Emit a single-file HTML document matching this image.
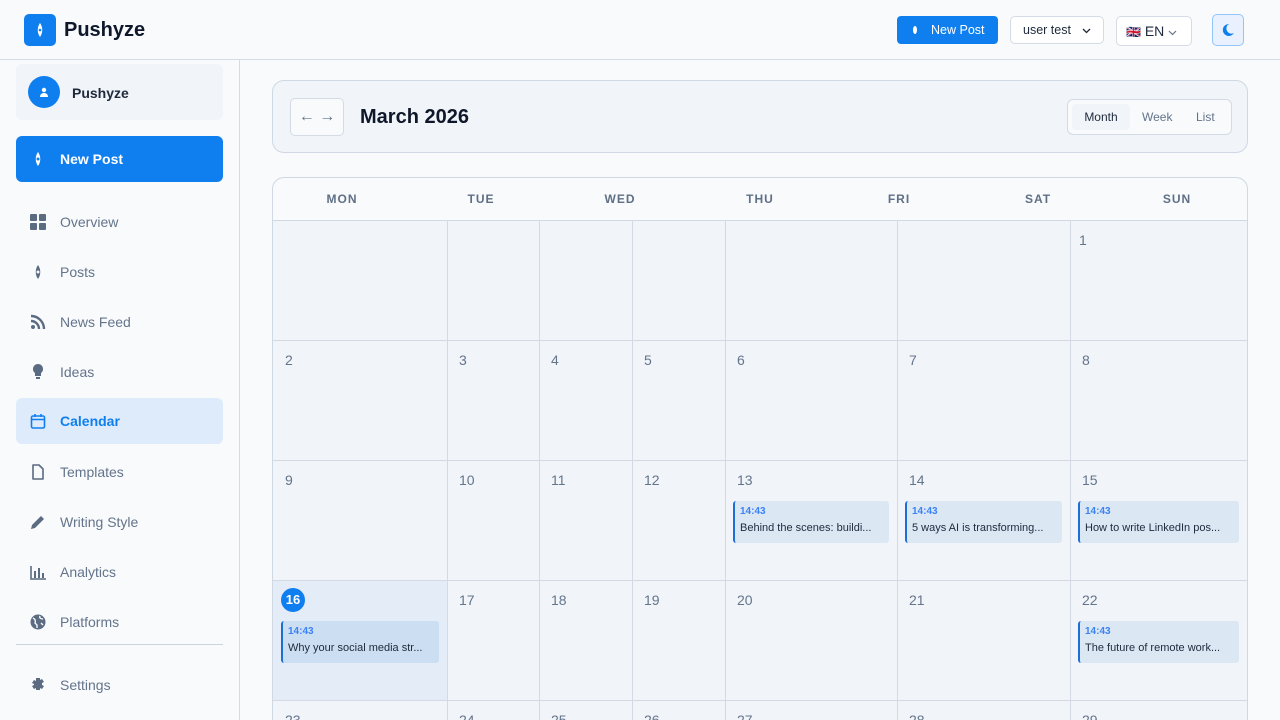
<!DOCTYPE html>
<html style="width:1280px;height:720px;overflow:hidden"><head><meta charset="utf-8"><style>
*{box-sizing:border-box;margin:0;padding:0}
body{width:1280px;height:720px;overflow:hidden;background:#f8fafc;font-family:"Liberation Sans",sans-serif;position:relative;color:#0f172a}
.abs{position:absolute}
.top{left:0;top:0;width:1280px;height:60px;border-bottom:1px solid #d5dbe4;background:#f8fafc}
.side{left:0;top:60px;width:240px;height:660px;border-right:1px solid #d5dbe4}
.nav{position:absolute;left:16px;width:207px;height:46px;border-radius:6px;display:flex;align-items:center;font-size:14px;color:#64748b}
.nav svg{position:absolute;left:14px;top:15px}
.nav span{position:absolute;left:44px}
.num{position:absolute;font-size:14px;color:#64748b}
.ev{position:absolute;height:42px;background:#dce7f4;border-left:2px solid #1d6fd8;border-radius:3px;padding:5px 0 0 5px;overflow:hidden}
.ev b{display:block;font-size:10px;color:#3b82f6;font-weight:bold}
.ev i{display:block;font-style:normal;font-size:11px;color:#1e293b;margin-top:5px;white-space:nowrap}
.dh{position:absolute;top:192px;font-size:12px;color:#5f6f86;letter-spacing:1px;font-weight:bold;width:60px;text-align:center}
.vl{position:absolute;top:220px;width:1px;height:500px;background:#d3dae4}
.hl{position:absolute;left:273px;width:974px;height:1px;background:#d3dae4}
</style></head><body>
<div class="abs top">
 <div class="abs" style="left:24px;top:14px;width:32px;height:32px;border-radius:5px;background:#0f7ff0"><svg width="10" height="16" viewBox="0 0 10 16" style="position:absolute;left:11px;top:8px"><path d="M5 1C2 5 2 11 5 15 8 11 8 5 5 1z" fill="#fff"/><circle cx="5" cy="8" r="1.3" fill="#0f7ff0"/></svg></div>
 <div class="abs" style="left:64px;top:19px;font-size:20px;font-weight:bold;color:#0f172a">Pushyze</div>
 <div class="abs" style="left:897px;top:16px;width:101px;height:28px;border-radius:4px;background:#0f7ff0;color:#fff;font-size:12.5px;line-height:28px"><span style="position:absolute;left:16px;top:10px;width:4px;height:8px;border-radius:50%;background:#fff"></span><span style="position:absolute;left:34px">New Post</span></div>
 <div class="abs" style="left:1010px;top:16px;width:94px;height:28px;border-radius:5px;border:1px solid #d5dbe4;background:#fff;font-size:12.5px;line-height:26px;padding-left:12px;color:#1e293b">user test <svg width="9" height="6" style="margin-left:8px"><path d="M1 1l3.5 3.5L8 1" stroke="#1e293b" stroke-width="1.3" fill="none"/></svg></div>
 <div class="abs" style="left:1116px;top:16px;width:76px;height:30px;border-radius:5px;border:1px solid #d5dbe4;background:#fff;font-size:14px;line-height:28px;padding-left:9px;color:#1e293b"><span style="font-size:12px">🇬🇧</span> EN <svg width="9" height="6"><path d="M1 1l3.5 3.5L8 1" stroke="#64748b" stroke-width="1.2" fill="none"/></svg></div>
 <div class="abs" style="left:1212px;top:14px;width:32px;height:32px;border-radius:5px;border:1px solid #93c5fd;background:#e8f1fd"><svg width="16" height="16" viewBox="0 0 16 16" style="position:absolute;left:7px;top:7px"><path d="M9 2a6 6 0 1 0 5 9A5 5 0 0 1 9 2z" fill="#0f7ff0"/></svg></div>
</div>
<div class="abs side">
 <div class="abs" style="left:16px;top:4px;width:207px;height:56px;border-radius:6px;background:#f1f5f9">
  <div class="abs" style="left:12px;top:12px;width:32px;height:32px;border-radius:50%;background:#0f7ff0"><svg width="10" height="10" viewBox="0 0 10 10" style="position:absolute;left:11px;top:11px"><circle cx="5" cy="3" r="2.2" fill="#fff"/><path d="M1 10c0-3 2-4 4-4s4 1 4 4z" fill="#fff"/></svg></div>
  <div class="abs" style="left:56px;top:21px;font-size:14px;font-weight:bold;color:#1e293b">Pushyze</div>
 </div>
 <div class="nav" style="top:76px;background:#0f7ff0;color:#fff;font-weight:bold"><svg width="16" height="16" viewBox="0 0 16 16"><path d="M8 1C5 5 5 11 8 15 11 11 11 5 8 1z" fill="#fff"/><circle cx="8" cy="8" r="1.5" fill="#0f7ff0"/></svg><span>New Post</span></div>
 <div class="nav" style="top:139px"><svg width="16" height="16"><rect x="0" y="0" width="7" height="7" rx="1" fill="#5b6b82"/><rect x="9" y="0" width="7" height="7" rx="1" fill="#5b6b82"/><rect x="0" y="9" width="7" height="7" rx="1" fill="#5b6b82"/><rect x="9" y="9" width="7" height="7" rx="1" fill="#5b6b82"/></svg><span>Overview</span></div>
 <div class="nav" style="top:189px"><svg width="16" height="16" viewBox="0 0 16 16"><path d="M8 1C5 5 5 11 8 15 11 11 11 5 8 1z" fill="#5b6b82"/><circle cx="8" cy="8" r="1.5" fill="#f8fafc"/></svg><span>Posts</span></div>
 <div class="nav" style="top:239px"><svg width="16" height="16" viewBox="0 0 16 16"><circle cx="3" cy="13" r="2" fill="#5b6b82"/><path d="M1 7a8 8 0 0 1 8 8M1 2a13 13 0 0 1 13 13" stroke="#5b6b82" stroke-width="2.4" fill="none"/></svg><span>News Feed</span></div>
 <div class="nav" style="top:289px"><svg width="16" height="16" viewBox="0 0 16 16"><path d="M8 0a5 5 0 0 0-3 9v3h6V9A5 5 0 0 0 8 0z" fill="#5b6b82"/><rect x="6" y="13" width="4" height="2" fill="#5b6b82"/></svg><span>Ideas</span></div>
 <div class="nav" style="top:338px;background:#deebfa;color:#0f7ff0;font-weight:bold"><svg width="16" height="16" viewBox="0 0 16 16"><rect x="1.5" y="3" width="13" height="12" rx="1.5" stroke="#0f7ff0" stroke-width="1.6" fill="none"/><path d="M1.5 6.5h13M5 1v3M11 1v3" stroke="#0f7ff0" stroke-width="1.6"/></svg><span>Calendar</span></div>
 <div class="nav" style="top:389px"><svg width="16" height="16" viewBox="0 0 16 16"><path d="M3 1h6l4 4v10H3z" stroke="#5b6b82" stroke-width="1.6" fill="none" stroke-linejoin="round"/></svg><span>Templates</span></div>
 <div class="nav" style="top:439px"><svg width="16" height="16" viewBox="0 0 16 16"><path d="M1 15l1-4 9-9 3 3-9 9z" fill="#5b6b82"/></svg><span>Writing Style</span></div>
 <div class="nav" style="top:489px"><svg width="16" height="16" viewBox="0 0 16 16"><path d="M1 2v13h15" stroke="#5b6b82" stroke-width="1.6" fill="none"/><rect x="4" y="7" width="2" height="7" fill="#5b6b82"/><rect x="8" y="4" width="2" height="10" fill="#5b6b82"/><rect x="12" y="9" width="2" height="5" fill="#5b6b82"/></svg><span>Analytics</span></div>
 <div class="nav" style="top:539px"><svg width="16" height="16" viewBox="0 0 16 16"><circle cx="8" cy="8" r="7.5" fill="#5b6b82"/><path d="M3 4c2 1 3 3 2 5l2 2v3M10 2c-1 2 1 3 3 3M11 9l2 2" stroke="#f8fafc" stroke-width="1.4" fill="none"/></svg><span>Platforms</span></div>
 <div class="abs" style="left:16px;top:584px;width:207px;height:1px;background:#cbd5e1"></div>
 <div class="nav" style="top:602px"><svg width="16" height="16" viewBox="0 0 16 16"><path d="M6 1h4v2l2-1 2 3-2 1v2l2 1-2 3-2-1v2H6v-2l-2 1-2-3 2-1V7L2 6l2-3 2 1z" fill="#5b6b82"/></svg><span>Settings</span></div>
</div>

<div class="abs" style="left:272px;top:80px;width:976px;height:73px;border:1px solid #cfd8e3;border-radius:12px;background:#f1f5f9">
 <div class="abs" style="left:17px;top:17px;width:54px;height:38px;border:1px solid #d5dbe4;border-radius:5px;background:#f8fafc;color:#64748b;font-size:16px;line-height:36px;text-align:center">← →</div>
 <div class="abs" style="left:87px;top:25px;font-size:20px;font-weight:bold;color:#0f172a">March 2026</div>
 <div class="abs" style="left:794px;top:18px;width:165px;height:36px;border:1px solid #d5dbe4;border-radius:6px;background:#f8fafc">
  <div class="abs" style="left:4px;top:4px;width:58px;height:26px;border-radius:4px;background:#f1f5f9;font-size:12px;line-height:26px;text-align:center;color:#1e293b">Month</div>
  <div class="abs" style="left:74px;top:4px;font-size:12px;line-height:26px;color:#64748b">Week</div>
  <div class="abs" style="left:128px;top:4px;font-size:12px;line-height:26px;color:#64748b">List</div>
 </div>
</div>

<div class="abs" style="left:272px;top:177px;width:976px;height:543px;border:1px solid #cfd8e3;border-bottom:none;border-radius:12px 12px 0 0;background:#f8fafc;overflow:hidden">
 <div class="abs" style="left:0;top:43px;width:976px;height:520px;background:#f1f5f9"></div>
 <div class="abs" style="left:0;top:403px;width:174px;height:120px;background:#e4ecf7"></div>
</div>
<div class="dh" style="left:312px">MON</div><div class="dh" style="left:451px">TUE</div><div class="dh" style="left:590px">WED</div><div class="dh" style="left:730px">THU</div><div class="dh" style="left:869px">FRI</div><div class="dh" style="left:1008px">SAT</div><div class="dh" style="left:1147px">SUN</div>

<div class="hl" style="top:220px;background:#cfd8e3"></div>
<div class="hl" style="top:340px"></div><div class="hl" style="top:460px"></div><div class="hl" style="top:580px"></div><div class="hl" style="top:700px"></div>
<div class="vl" style="left:447px"></div><div class="vl" style="left:539px"></div><div class="vl" style="left:632px"></div><div class="vl" style="left:725px"></div><div class="vl" style="left:897px"></div><div class="vl" style="left:1070px"></div>

<span class="num" style="left:1079px;top:232px">1</span>
<span class="num" style="left:285px;top:352px">2</span><span class="num" style="left:459px;top:352px">3</span><span class="num" style="left:551px;top:352px">4</span><span class="num" style="left:644px;top:352px">5</span><span class="num" style="left:737px;top:352px">6</span><span class="num" style="left:909px;top:352px">7</span><span class="num" style="left:1082px;top:352px">8</span>
<span class="num" style="left:285px;top:472px">9</span><span class="num" style="left:459px;top:472px">10</span><span class="num" style="left:551px;top:472px">11</span><span class="num" style="left:644px;top:472px">12</span><span class="num" style="left:737px;top:472px">13</span><span class="num" style="left:909px;top:472px">14</span><span class="num" style="left:1082px;top:472px">15</span>
<span style="position:absolute;left:281px;top:588px;width:24px;height:24px;border-radius:50%;background:#0f7ff0;color:#fff;font-weight:bold;font-size:13px;line-height:24px;text-align:center">16</span>
<span class="num" style="left:459px;top:592px">17</span><span class="num" style="left:551px;top:592px">18</span><span class="num" style="left:644px;top:592px">19</span><span class="num" style="left:737px;top:592px">20</span><span class="num" style="left:909px;top:592px">21</span><span class="num" style="left:1082px;top:592px">22</span>
<span class="num" style="left:285px;top:712px">23</span><span class="num" style="left:459px;top:712px">24</span><span class="num" style="left:551px;top:712px">25</span><span class="num" style="left:644px;top:712px">26</span><span class="num" style="left:737px;top:712px">27</span><span class="num" style="left:909px;top:712px">28</span><span class="num" style="left:1082px;top:712px">29</span>

<div class="ev" style="left:733px;top:501px;width:156px"><b>14:43</b><i>Behind the scenes: buildi...</i></div>
<div class="ev" style="left:905px;top:501px;width:157px"><b>14:43</b><i>5 ways AI is transforming...</i></div>
<div class="ev" style="left:1078px;top:501px;width:161px"><b>14:43</b><i>How to write LinkedIn pos...</i></div>
<div class="ev" style="left:281px;top:621px;width:158px;background:#ccdef1"><b>14:43</b><i>Why your social media str...</i></div>
<div class="ev" style="left:1078px;top:621px;width:161px"><b>14:43</b><i>The future of remote work...</i></div>
</body></html>
